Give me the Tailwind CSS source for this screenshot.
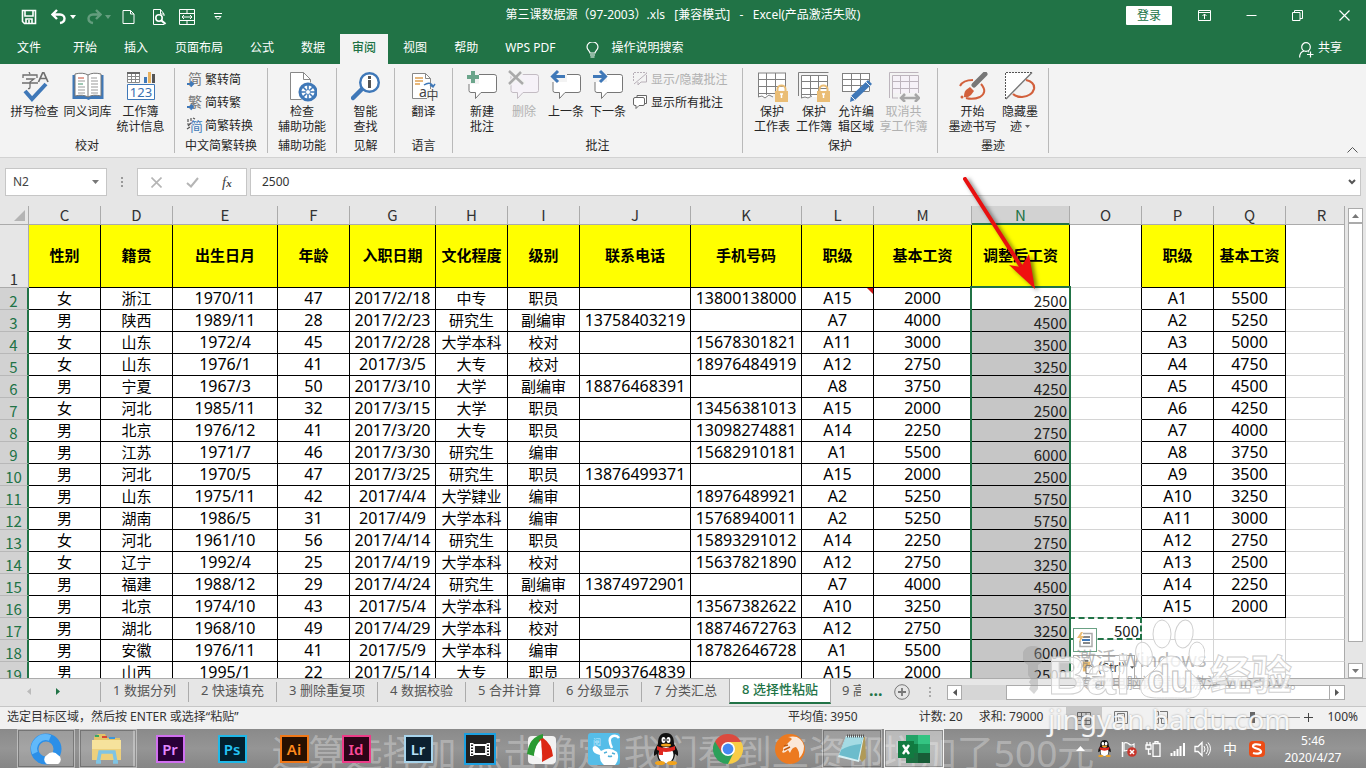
<!DOCTYPE html>
<html lang="zh-CN">
<head>
    <meta charset="UTF-8">
    <meta name="viewport" content="width=device-width, initial-scale=1.0">
    <title>第三课数据源（97-2003）.xls - Excel</title>
    <script src="https://cdn.jsdelivr.net/npm/@tailwindcss/browser@4"></script>
</head>
<body class="relative flex h-screen flex-col overflow-hidden bg-[#e6e6e6] font-['Noto_Sans','Noto_Sans_CJK_SC',sans-serif] text-xs text-[#262626]">

    <!-- Title bar -->
    <header class="relative flex h-[34px] shrink-0 items-center justify-between bg-[#217346] text-white">
        <div class="flex items-center pl-[21px]">
            <button aria-label="保存" class="mr-[14px]"><svg width="16" height="16" viewBox="0 0 16 16" fill="none" stroke="#fff" stroke-width="1.6"><path d="M1.5 1.5h13v13h-11l-2-2zM4 2v5h8V2M5 14v-4h6v4M8 11v3"/></svg></button>
            <button aria-label="撤消" class="mr-[3px]"><svg width="16" height="16" viewBox="0 0 16 16" fill="none" stroke="#fff" stroke-width="2.400"><path d="M6 1L1.500 5.500 6 10M2 5.500h7c3 0 4.500 2 4.500 4s-1.500 4-4.500 4.500"/></svg></button>
            <svg class="mr-[10px]" width="6" height="4" viewBox="0 0 6 4" fill="#fff"><path d="M0 0h6L3 4z"/></svg>
            <button aria-label="恢复" class="mr-[3px] opacity-30"><svg width="16" height="16" viewBox="0 0 16 16" fill="none" stroke="#fff" stroke-width="2.400"><path d="M10 1l4.500 4.500L10 10M14 5.500H7c-3 0-4.500 2-4.500 4s1.500 4 4.500 4.500"/></svg></button>
            <svg class="mr-[11px] opacity-30" width="6" height="4" viewBox="0 0 6 4" fill="#fff"><path d="M0 0h6L3 4z"/></svg>
            <button aria-label="新建" class="mr-[16px]"><svg width="13" height="16" viewBox="0 0 13 16" fill="none" stroke="#fff"><path d="M1 1.500h7.500l3.500 3.500v9.500H1zM8.500 1.500V5H12"/></svg></button>
            <button aria-label="打印预览" class="mr-[12px]"><svg width="16" height="16" viewBox="0 0 16 16" fill="none" stroke="#fff"><path d="M13 7V5L9.500.500H2.500v15H13M9.500.500V5H13"/><circle cx="8" cy="9" r="3.200" stroke-width="1.600"/><path d="M10.500 11.500l4 3.500" stroke-width="2.200"/></svg></button>
            <button aria-label="合并后居中" class="mr-[19px]"><svg width="16" height="16" viewBox="0 0 16 16" fill="none" stroke="#fff"><path d="M.5.500h15v15H.5zM.5 4.500h15M.5 11.500h15M8 .5v4M8 11.500v4M3 8h10M5 6L3 8l2 2M11 6l2 2-2 2"/></svg></button>
            <button aria-label="自定义快速访问工具栏"><svg width="8" height="8" viewBox="0 0 8 8" fill="none" stroke="#fff"><path d="M0 .5h8M1 3.500l3 3 3-3z"/></svg></button>
        </div>
        <h1 class="absolute inset-x-0 top-[5px] text-center leading-5 whitespace-pre pointer-events-none">第三课数据源（97-2003）.xls   [兼容模式]   -   Excel(产品激活失败)</h1>
        <div class="flex h-full items-start pt-[6px]">
            <button class="mr-[26px] h-[19px] w-[46px] rounded-[1px] bg-white text-[#217346] leading-[19px]">登录</button>
            <button aria-label="功能区显示选项" class="mt-[4px] mr-[35px]"><svg width="13" height="11" viewBox="0 0 13 11" fill="none" stroke="#fff"><path d="M.5.500h12v10H.5zM.5 2.500h12M6.500 9V4M4.500 6l2-2 2 2"/></svg></button>
            <button aria-label="最小化" class="mt-[4px] mr-[35px]"><svg width="11" height="11" viewBox="0 0 11 11" stroke="#fff"><path d="M.5 5.500h10"/></svg></button>
            <button aria-label="向下还原" class="mt-[4px] mr-[36px]"><svg width="11" height="11" viewBox="0 0 11 11" fill="none" stroke="#fff"><path d="M.5 2.500h7.500v8H.5zM2.500 2.500v-2h8v8H8"/></svg></button>
            <button aria-label="关闭" class="mt-[4px] mr-4"><svg width="11" height="11" viewBox="0 0 11 11" stroke="#fff" stroke-width="1.200"><path d="M.5.500l10 10M10.500.500L.5 10.500"/></svg></button>
        </div>
    </header>

    <!-- Ribbon tabs -->
    <nav class="flex h-[30px] shrink-0 gap-[3px] bg-[#217346] pl-[5px] text-white">
        <button class="mr-[5px] px-3 pb-0.5">文件</button>
        <button class="px-3 pb-0.5">开始</button>
        <button class="px-3 pb-0.5">插入</button>
        <button class="px-3 pb-0.5">页面布局</button>
        <button class="px-3 pb-0.5">公式</button>
        <button class="px-3 pb-0.5">数据</button>
        <button class="bg-[#f3f3f3] px-3 pb-0.5 font-medium text-[#217346]">审阅</button>
        <button class="px-3 pb-0.5">视图</button>
        <button class="px-3 pb-0.5">帮助</button>
        <button class="px-3 pb-0.5">WPS PDF</button>
        <button class="ml-[15px] flex items-center gap-[13px] pb-0.5"><svg class="mt-1" width="13" height="16" viewBox="0 0 13 16" fill="none" stroke="#fff" stroke-width="1.200"><path d="M4 11c0-2-3-3-3-6a5.300 5 0 0 1 11 0c0 3-3 4-3 6zM4 13h5M4.500 15h4"/></svg>操作说明搜索</button>
        <button class="mr-6 ml-auto flex items-center gap-1 pb-0.5"><svg class="mt-1" width="15" height="16" viewBox="0 0 15 16" fill="none" stroke="#fff" stroke-width="1.200"><circle cx="7" cy="5" r="4.300"/><path d="M.6 15.500c0-4 2-6 4.500-6.500M9 9.500l1 .5M8 12.500h6.500M11.500 9.500v6"/></svg>共享</button>
    </nav>

    <!-- Ribbon -->
    <section class="relative flex h-[94px] shrink-0 border-b border-[#d2d2d2] bg-[#f3f3f3] py-1 leading-[15px]">
        <div class="flex w-[175px] flex-col border-r border-[#b9b9b9] pt-1">
            <div class="flex h-[69px] items-start pl-2">
                <button class="flex w-[53px] flex-col items-center gap-0.5 whitespace-nowrap">
                    <svg width="30" height="30" viewBox="0 0 30 30"><g fill="none" stroke="#6f6f6f" stroke-width="1.300"><path d="M9 0l1 2M3 6V3h14v3M6 7h8l-4 3v5q0 2-2 1.500M2 11h16"/><path stroke-width="1.700" d="M18.500 10L23 0h.500L28 10M20 6.500h6.500"/></g><path d="M5 19l7 8L26 12" fill="none" stroke="#3f78b8" stroke-width="4"/></svg>
                    <span>拼写检查</span>
                </button>
                <button class="flex w-[53px] flex-col items-center gap-0.5 whitespace-nowrap">
                    <svg width="32" height="30" viewBox="0 0 32 30"><path d="M.5 3H3v20h26V3h2.500v24h-13l-2 1-2-1H.5z" fill="#3f78b8"/><path d="M3 2q8-2 13 1 5-3 13-1v22q-8-2-13 1-5-3-13-1z" fill="#fff" stroke="#777"/><path d="M16 3v22" stroke="#777"/><path d="M6 6h6" stroke="#c84830"/><path d="M6 9h7M6 15h7M6 18h7M6 21h7M19 6h6M19 9h7M19 12h7M19 15h7M19 18h7M19 21h7" stroke="#999"/><path d="M6 12h5" stroke="#3f9068"/></svg>
                    <span>同义词库</span>
                </button>
                <button class="flex w-[53px] flex-col items-center gap-0.5 whitespace-nowrap">
                    <svg width="30" height="30" viewBox="0 0 30 30"><path d="M1.500 1.500h12v9h-12zM1.500 4.500h12M1.500 7.500h12M5.500 1.500v9M9.500 1.500v9" fill="#fff" stroke="#888"/><path d="M1 0h13v2H1z" fill="#666"/><path d="M18 5h3v6h-3z" fill="#3f78b8"/><path d="M22 0h3v11h-3z" fill="#e8b260"/><path d="M26 2h3v9h-3z" fill="#555"/><path d="M1.500 12.500h27v15h-27z" fill="#fff" stroke="#3f78b8"/><text x="15" y="25" text-anchor="middle" font-size="13" fill="#3a70b0">123</text></svg>
                    <span>工作簿<br>统计信息</span>
                </button>
            </div>
            <span class="text-center">校对</span>
        </div>
        <div class="flex w-[93px] flex-col border-r border-[#b9b9b9] pt-1">
            <div class="flex h-[69px] flex-col gap-2 pl-3">
                <button class="flex items-center gap-[3px]"><svg class="overflow-visible" width="15" height="15" viewBox="0 0 15 15"><text x="1" y="12" font-size="14" fill="#777">简</text><path d="M0 12h6M3.500 9.500L6 12l-2.500 2.500" fill="none" stroke="#3f78b8" stroke-width="2"/></svg>繁转简</button>
                <button class="flex items-center gap-[3px]"><svg class="overflow-visible" width="15" height="15" viewBox="0 0 15 15"><text x="1" y="12" font-size="14" fill="#777">繁</text><path d="M0 12h6M3.500 9.500L6 12l-2.500 2.500" fill="none" stroke="#3f78b8" stroke-width="2"/></svg>简转繁</button>
                <button class="flex items-center gap-[3px]"><svg class="overflow-visible" width="15" height="15" viewBox="0 0 15 15"><path d="M1 1v3M4 0v3M0 6h3M1 8l3-3M0 11l3-2M6 0l2 1" stroke="#555" stroke-width="1.200"/><text x="3" y="13" font-size="13" fill="#3f78b8">简</text></svg>简繁转换</button>
            </div>
            <span class="text-center">中文简繁转换</span>
        </div>
        <div class="flex w-[69px] flex-col border-r border-[#b9b9b9] pt-1">
            <div class="flex h-[69px] items-start justify-center">
                <button class="flex w-[53px] flex-col items-center gap-0.5 whitespace-nowrap">
                    <svg width="30" height="30" viewBox="0 0 30 30"><path d="M3.500.500h13l7 7v20h-20z" fill="#fff" stroke="#888"/><path d="M16.500.500v7h7" fill="none" stroke="#888"/><circle cx="21" cy="20" r="10" fill="#f3f3f3"/><circle cx="21" cy="20" r="8" fill="#fff" stroke="#3f78b8" stroke-width="3"/><path d="M21 13v14M14 20h14M16 15l10 10M26 15L16 25" stroke="#3f78b8" stroke-width="1.600"/><circle cx="21" cy="20" r="2" fill="#fff"/></svg>
                    <span>检查<br>辅助功能</span>
                </button>
            </div>
            <span class="text-center">辅助功能</span>
        </div>
        <div class="flex w-[58px] flex-col border-r border-[#b9b9b9] pt-1">
            <div class="flex h-[69px] items-start justify-center">
                <button class="flex w-[53px] flex-col items-center gap-0.5 whitespace-nowrap">
                    <svg width="30" height="30" viewBox="0 0 30 30"><path d="M11 17L2 26" stroke="#3f78b8" stroke-width="4.500" stroke-linecap="round"/><circle cx="18.500" cy="10.500" r="9.300" fill="#fff" stroke="#3f78b8" stroke-width="2.400"/><path d="M17 4h3v3h-3zM17 8h3v8h-3z" fill="#555"/></svg>
                    <span>智能<br>查找</span>
                </button>
            </div>
            <span class="text-center">见解</span>
        </div>
        <div class="flex w-[58px] flex-col border-r border-[#b9b9b9] pt-1">
            <div class="flex h-[69px] items-start justify-center">
                <button class="flex w-[53px] flex-col items-center gap-0.5 whitespace-nowrap">
                    <svg width="30" height="30" viewBox="0 0 30 30"><path d="M3.500 1.500h13l5 5v20h-18z" fill="#fff" stroke="#888"/><path d="M16.500 1.500v5h5" fill="none" stroke="#888"/><path d="M6 6h8M6 9h8M6 12h5" stroke="#e0a050" stroke-width="1.500"/><path d="M15 13q6-4 9 1m-3-1l3 2 2-3" fill="none" stroke="#3f78b8" stroke-width="1.500"/><path d="M18 17h12v13H18z" fill="#f3f3f3"/><text x="10" y="25" font-size="14" fill="#444">a</text><text x="17.500" y="28" font-size="12" fill="#444">中</text></svg>
                    <span>翻译</span>
                </button>
            </div>
            <span class="text-center">语言</span>
        </div>
        <div class="flex w-[290px] flex-col border-r border-[#b9b9b9] pt-1">
            <div class="flex h-[69px] items-start pl-2">
                <button class="flex w-[42px] flex-col items-center gap-0.5 whitespace-nowrap">
                    <svg class="overflow-visible" width="32" height="30" viewBox="0 0 32 30"><path d="M5 2.500h23q2.500 0 2.500 2v14q0 2-2.500 2H15l-5.500 6v-6H5q-2 0-2-2V4.500q0-2 2-2z" fill="#fff" stroke="#777"/><path d="M0 -1h13v13H0z" fill="#f3f3f3"/><path d="M7 -1v12M1 5h12" stroke="#6ba58b" stroke-width="4"/></svg>
                    <span>新建<br>批注</span>
                </button>
                <button disabled class="flex w-[42px] flex-col items-center gap-0.5 whitespace-nowrap text-[#b1b1b1]">
                    <svg class="overflow-visible" width="32" height="30" viewBox="0 0 32 30"><path d="M5 2.500h23q2.500 0 2.500 2v14q0 2-2.500 2H15l-5.500 6v-6H5q-2 0-2-2V4.500q0-2 2-2z" fill="#f6f2f8" stroke="#c3bcc3"/><path d="M1 -1l15 13M15 -1L1 12" stroke="#f3f3f3" stroke-width="5"/><path d="M1 -1l14 13M13 0L1 12" stroke="#aaa" stroke-width="2.500"/></svg>
                    <span>删除</span>
                </button>
                <button class="flex w-[42px] flex-col items-center gap-0.5 whitespace-nowrap">
                    <svg class="overflow-visible" width="32" height="30" viewBox="0 0 32 30"><path d="M5 2.500h23q2.500 0 2.500 2v14q0 2-2.500 2H15l-5.500 6v-6H5q-2 0-2-2V4.500q0-2 2-2z" fill="#fff" stroke="#777"/><path d="M1 0h16v10H1z" fill="#f3f3f3"/><path d="M2 4.500h13M8 -1L2.500 4.500 8 10" fill="none" stroke="#3f78b8" stroke-width="3"/></svg>
                    <span>上一条</span>
                </button>
                <button class="flex w-[42px] flex-col items-center gap-0.5 whitespace-nowrap">
                    <svg class="overflow-visible" width="32" height="30" viewBox="0 0 32 30"><path d="M5 2.500h23q2.500 0 2.500 2v14q0 2-2.500 2H15l-5.500 6v-6H5q-2 0-2-2V4.500q0-2 2-2z" fill="#fff" stroke="#777"/><path d="M0 0h15v10H0z" fill="#f3f3f3"/><path d="M1 4.500h13M8 -1l5.500 5.500L8 10" fill="none" stroke="#3f78b8" stroke-width="3"/></svg>
                    <span>下一条</span>
                </button>
                <div class="flex flex-col gap-2 pl-1">
                    <button disabled class="flex items-center gap-[3px] whitespace-nowrap text-[#b1b1b1]"><svg width="15" height="15" viewBox="0 0 15 15" fill="none" stroke="#b8b0b8"><path stroke-dasharray="2 1" d="M.5 9V.500h13"/><path d="M14 1L1 12M13.500 3v7H8l-3 3v-3"/></svg>显示/隐藏批注</button>
                    <button class="flex items-center gap-[3px] whitespace-nowrap"><svg width="15" height="15" viewBox="0 0 15 15" fill="#fff" stroke="#666"><path d="M4 3V.500h9.500v8H12"/><path d="M2 2.500h8q1.500 0 1.500 1.500v5q0 1.500-1.500 1.500H6l-3 3v-3H2Q.5 10.500.5 9V4Q.5 2.500 2 2.500z"/></svg>显示所有批注</button>
                </div>
            </div>
            <span class="text-center">批注</span>
        </div>
        <div class="flex w-[195px] flex-col border-r border-[#b9b9b9] pt-1">
            <div class="flex h-[69px] items-start pl-2">
                <button class="flex w-[42px] flex-col items-center gap-0.5 whitespace-nowrap">
                    <svg width="32" height="30" viewBox="0 0 32 30"><path d="M2 .5h27v18H18l-1 6-3-2-2 3H2z" fill="#fff"/><path d="M2 1h28M2.500 1v24M10.500 1v22M19.500 1v22M29.500 1v14M2 7.500h27M2 14.500h27M2 21.500h17M2 25l4-1 3 2 4-3 4 2" fill="none" stroke="#808080"/><path d="M19 19h13v11H19z" fill="#eabd75"/><path d="M21.500 19v-2a4 3.500 0 0 1 8 0v2" fill="none" stroke="#eabd75" stroke-width="2"/><path d="M24 22h3M25.500 22v4" stroke="#fff" stroke-width="1.500"/></svg>
                    <span>保护<br>工作表</span>
                </button>
                <button class="flex w-[42px] flex-col items-center gap-0.5 whitespace-nowrap">
                    <svg width="32" height="30" viewBox="0 0 32 30"><path d="M4 3h26v22H4z" fill="#fff"/><path d="M.5 24V.500h30M3.500 26V3.500h26v14M12.500 4v20M20.500 4v19M3 9.500h26M3 16.500h26M3 22.500h16M3 26l4-1 3 1 4-2" fill="none" stroke="#808080"/><path d="M19 19h13v11H19z" fill="#eabd75"/><path d="M21.500 19v-2a4 3.500 0 0 1 8 0v2" fill="none" stroke="#eabd75" stroke-width="2"/><path d="M24 22h3M25.500 22v4" stroke="#fff" stroke-width="1.500"/></svg>
                    <span>保护<br>工作簿</span>
                </button>
                <button class="flex w-[42px] flex-col items-center gap-0.5 whitespace-nowrap">
                    <svg width="32" height="30" viewBox="0 0 32 30"><path d="M2.500 2h27v17h-27z" fill="#fff"/><path d="M2 1.500h28M2.500 1.500v18M11.500 1.500v18M20.500 1.500v18M29.500 1.500v18M2 7.500h27M2 13.500h27M2 19.500h27" fill="none" stroke="#808080"/><path d="M28 8l4 4-17 16-5 2 1-6z" fill="#3f78b8"/><path d="M26 10l4 4M11 24l4 4" stroke="#f3f3f3" stroke-width="1"/></svg>
                    <span>允许编<br>辑区域</span>
                </button>
                <button disabled class="flex w-[53px] flex-col items-center gap-0.5 whitespace-nowrap text-[#b1b1b1]">
                    <svg width="32" height="30" viewBox="0 0 32 30"><path d="M4 3h26v18H4z" fill="#f6f2f8"/><path d="M1.500 26V.500h29M4.500 26V3.500h26V21M12.500 4v18M21.500 4v17M4 9.500h26M4 16.500h26M4 26h6" fill="none" stroke="#bdb5bd"/><path d="M13 26h18M17 22l-4 4 4 4M27 22l4 4-4 4" fill="none" stroke="#a6a6a6" stroke-width="2.500"/></svg>
                    <span>取消共<br>享工作簿</span>
                </button>
            </div>
            <span class="text-center">保护</span>
        </div>
        <div class="flex w-[111px] flex-col border-r border-[#b9b9b9] pt-1">
            <div class="flex h-[69px] items-start pl-2">
                <button class="flex w-[53px] flex-col items-center gap-0.5 whitespace-nowrap">
                    <svg width="30" height="30" viewBox="0 0 30 30"><path d="M2 14Q5 8 15 8M23 12q7 8-1 13-7 3-14 1" fill="none" stroke="#d2603c" stroke-width="2"/><path d="M27 2L16 13" stroke="#777" stroke-width="5" stroke-linecap="round"/><path d="M12 15l4 4-3 4q-3 3-7 2 0-5 2-7z" fill="#d2603c"/><circle cx="4" cy="25" r="1.500" fill="#d2603c"/></svg>
                    <span>开始<br>墨迹书写</span>
                </button>
                <button class="flex w-[42px] flex-col items-center gap-0.5 whitespace-nowrap">
                    <svg width="32" height="30" viewBox="0 0 32 30"><path d="M1 1h26L1 27z" fill="#fff"/><path d="M1.500 27V.500H28" fill="none" stroke="#555" stroke-dasharray="2 1"/><path d="M28 .5L2 27" stroke="#777" stroke-width="1.400"/><path d="M22 8q9 2 8 9-2 7-12 8-6 0-9-3" fill="none" stroke="#d2603c" stroke-width="2.200"/></svg>
                    <span>隐藏墨<br>迹 <svg class="mb-0.5 inline" width="5" height="3" viewBox="0 0 5 3" fill="#666"><path d="M0 0h5L2.500 3z"/></svg></span>
                </button>
            </div>
            <span class="text-center">墨迹</span>
        </div>
        <button aria-label="折叠功能区" class="mr-2 ml-auto self-end"><svg width="11" height="6" viewBox="0 0 11 6" fill="none" stroke="#555"><path d="M.5 5.500l5-5 5 5"/></svg></button>
    </section>

    <!-- Formula bar -->
    <section class="flex h-[48px] shrink-0 items-start pt-[10px] pr-[5px] pl-[5px]">
        <div class="flex h-[28px] w-[102px] items-center border border-[#c6c6c6] bg-white">
            <input aria-label="名称框" value="N2" class="w-[84px] pl-[7px] text-[#444] outline-none">
            <button aria-label="名称列表" class="ml-0.5"><svg width="7" height="4" viewBox="0 0 7 4" fill="#777"><path d="M0 0h7L3.500 4z"/></svg></button>
        </div>
        <svg class="mt-[9px] mr-[14px] ml-[14px]" width="2" height="11" viewBox="0 0 2 11" fill="#999"><path d="M0 0h2v2H0zM0 4h2v2H0zM0 8h2v2H0z"/></svg>
        <div class="mr-[3px] flex h-[28px] w-[110px] items-center border border-[#c6c6c6] bg-white">
            <button aria-label="取消" class="ml-[13px]"><svg width="11" height="11" viewBox="0 0 11 11" stroke="#b5b5b5" stroke-width="1.600"><path d="M.5.500l10 10M10.500.500L.5 10.500"/></svg></button>
            <button aria-label="输入" class="ml-[24px]"><svg width="13" height="11" viewBox="0 0 13 11" fill="none" stroke="#b5b5b5" stroke-width="2"><path d="M1 6l4 3.500L12 1"/></svg></button>
            <button aria-label="插入函数" class="ml-[23px] font-['Liberation_Serif',serif] text-[15px] leading-4 text-[#444] italic">f<span class="text-[11px] font-bold">x</span></button>
        </div>
        <div class="flex h-[28px] flex-1 items-center border border-[#c6c6c6] bg-white">
            <input aria-label="编辑栏" value="2500" class="min-w-0 flex-1 pl-[11px] text-[#333] outline-none">
            <button aria-label="展开编辑栏" class="mr-1"><svg width="8" height="6" viewBox="0 0 8 6" fill="none" stroke="#555" stroke-width="2"><path d="M1 1l3 3 3-3"/></svg></button>
        </div>
    </section>

    <!-- Sheet -->
    <main class="flex min-h-0 flex-1">
        <div class="min-w-0 flex-1 overflow-hidden">
            <table class="w-full table-fixed border-separate border-spacing-0 text-center text-black">
                <colgroup>
                    <col class="w-[29px]"><col class="w-[72px]"><col class="w-[72px]"><col class="w-[105px]"><col class="w-[72px]"><col class="w-[86px]"><col class="w-[72px]"><col class="w-[72px]"><col class="w-[111px]"><col class="w-[111px]"><col class="w-[72px]"><col class="w-[98px]"><col class="w-[98px]"><col class="w-[72px]"><col class="w-[72px]"><col class="w-[72px]"><col>
                </colgroup>
                <thead id="columns"></thead>
                <tbody id="rows"></tbody>
            </table>
        </div>
        <div class="mr-[3px] ml-[3px] flex w-[15px] shrink-0 flex-col pt-[2px]">
            <button aria-label="向上滚动" class="flex h-[15px] shrink-0 items-center justify-center border border-[#ababab] bg-white"><svg width="7" height="4" viewBox="0 0 7 4" fill="#777"><path d="M0 4h7L3.500 0z"/></svg></button>
            <div class="mb-[21px] flex-1 border border-[#ababab] bg-white"></div>
            <button aria-label="向下滚动" class="flex h-[15px] shrink-0 items-center justify-center border border-[#ababab] bg-white"><svg width="7" height="4" viewBox="0 0 7 4" fill="#777"><path d="M0 0h7L3.500 4z"/></svg></button>
        </div>
    </main>

    <!-- Sheet tabs -->
    <section class="flex h-[28px] shrink-0 border-t border-[#ababab] text-[13px] text-[#555]">
        <div class="flex w-[100px] items-center gap-[25px] pb-0.5 pl-[27px]">
            <svg width="4" height="7" viewBox="0 0 4 7" fill="#bbb"><path d="M4 0v7L0 3.500z"/></svg>
            <svg width="4" height="7" viewBox="0 0 4 7" fill="#217346"><path d="M0 0v7l4-3.500z"/></svg>
        </div>
        <button class="mt-[3px] h-[20px] w-[88px] border-l border-[#ababab] pb-1 leading-4 whitespace-nowrap">1 数据分列</button>
        <button class="mt-[3px] h-[20px] w-[88px] border-l border-[#ababab] pb-1 leading-4 whitespace-nowrap">2 快速填充</button>
        <button class="mt-[3px] h-[20px] w-[101px] border-l border-[#ababab] pb-1 leading-4 whitespace-nowrap">3 删除重复项</button>
        <button class="mt-[3px] h-[20px] w-[88px] border-l border-[#ababab] pb-1 leading-4 whitespace-nowrap">4 数据校验</button>
        <button class="mt-[3px] h-[20px] w-[88px] border-l border-[#ababab] pb-1 leading-4 whitespace-nowrap">5 合并计算</button>
        <button class="mt-[3px] h-[20px] w-[88px] border-l border-[#ababab] pb-1 leading-4 whitespace-nowrap">6 分级显示</button>
        <button class="mt-[3px] h-[20px] w-[88px] border-l border-[#ababab] pb-1 leading-4 whitespace-nowrap">7 分类汇总</button>
        <button class="h-[25px] w-[102px] border-x border-b-2 border-x-[#ababab] border-b-[#217346] bg-white pb-px font-medium whitespace-nowrap text-[#217346]">8 选择性粘贴</button>
        <button class="mt-[3px] h-[20px] w-[30px] overflow-hidden pb-1 pl-[11px] text-left leading-4 whitespace-nowrap">9 高级</button>
        <button class="ml-2 h-[22px] text-base leading-[22px] font-bold text-[#217346]">...</button>
        <button aria-label="新工作表" class="mt-[5px] ml-[11px] h-4"><svg width="16" height="16" viewBox="0 0 16 16" fill="none" stroke="#777"><circle cx="8" cy="8" r="7.300"/><path d="M4 8h8M8 4v8" stroke-width="1.800"/></svg></button>
        <div class="ml-auto flex items-start pt-[6px]">
            <svg class="mt-0.5 mr-4" width="2" height="11" viewBox="0 0 2 11" fill="#aaa"><path d="M0 0h2v2H0zM0 4h2v2H0zM0 8h2v2H0z"/></svg>
            <button aria-label="向左滚动" class="flex h-[15px] w-[15px] items-center justify-center border border-[#ababab] bg-white"><svg width="4" height="7" viewBox="0 0 4 7" fill="#555"><path d="M4 0v7L0 3.500z"/></svg></button>
            <div class="h-[15px] w-[44px] bg-[#d6d6d6]"></div>
            <div class="h-[15px] w-[324px] border border-[#ababab] bg-white"></div>
            <button aria-label="向右滚动" class="mr-[21px] flex h-[15px] w-[15px] items-center justify-center border border-l-0 border-[#ababab] bg-white"><svg width="4" height="7" viewBox="0 0 4 7" fill="#555"><path d="M0 0v7l4-3.500z"/></svg></button>
        </div>
    </section>

    <!-- Status bar -->
    <footer class="flex h-[23px] shrink-0 items-center border-t border-[#c6c6c6] bg-[#f1f1f1] pr-2 pl-[7px] pb-0.5 leading-[20px] text-[#333]">
        <span>选定目标区域，然后按 ENTER 或选择“粘贴”</span>
        <span class="ml-auto">平均值: 3950</span>
        <span class="ml-[61px]">计数: 20</span>
        <span class="ml-4">求和: 79000</span>
        <button aria-label="普通" class="-mb-0.5 ml-[23px] flex h-[22px] w-[36px] items-center justify-center bg-[#c8c8c8]"><svg width="14" height="13" viewBox="0 0 14 13" fill="none" stroke="#666"><path d="M.5.500h13v12H.5zM.5 4.500h13M.5 8.500h13M4.500.500v12M9 .5v12"/></svg></button>
        <button aria-label="页面布局" class="ml-[12px]"><svg width="14" height="13" viewBox="0 0 14 13" fill="none" stroke="#777"><path d="M.5.500h13v12H.5zM3.500 2.500h7v8h-7zM5 5h4M5 7h4"/></svg></button>
        <button aria-label="分页预览" class="ml-[26px]"><svg width="14" height="13" viewBox="0 0 14 13" fill="none" stroke="#777"><path d="M.5.500h4v12h-4zM6 .5h7.500v7H6M7.500 8v4.500h6V8M.5 8h4"/></svg></button>
        <button aria-label="缩小" class="ml-[19px]"><svg width="9" height="9" viewBox="0 0 9 9" stroke="#555"><path d="M0 4.500h9"/></svg></button>
        <input type="range" aria-label="缩放" min="10" max="190" value="100" class="mr-1 ml-2 h-3 w-[96px] appearance-none bg-[linear-gradient(#999,#999)] bg-[length:100%_1px] bg-center bg-no-repeat [&::-webkit-slider-thumb]:h-[11px] [&::-webkit-slider-thumb]:w-[5px] [&::-webkit-slider-thumb]:appearance-none [&::-webkit-slider-thumb]:bg-[#666]">
        <button aria-label="放大"><svg width="9" height="9" viewBox="0 0 9 9" stroke="#444"><path d="M0 4.500h9M4.500 0v9"/></svg></button>
        <span class="ml-[14px]">100%</span>
    </footer>

    <!-- Taskbar -->
    <div class="relative flex h-[39px] shrink-0 items-center justify-between overflow-hidden bg-linear-to-b from-[#8a8a8a] via-[#959595] to-[#868686] pl-[15px]">
        <p class="absolute inset-x-0 top-0 text-center text-[37px] leading-[48px] whitespace-nowrap text-white/30">运算选择加 点击确定 我们看到工资都增加了500元</p>
        <div class="relative flex h-full">
            <button aria-label="QQ浏览器" class="flex w-[62px] items-center justify-center"><span class="flex h-full w-[58px] items-center justify-center border border-white/30 bg-white/15 outline outline-black/25 -outline-offset-2">
                <svg width="32" height="32" viewBox="0 0 32 32"><circle cx="16" cy="16" r="11.500" fill="none" stroke="#2b8fe8" stroke-width="8"/><path d="M5 20A11.500 11.500 0 0 1 20 5" fill="none" stroke="#61b9fa" stroke-width="6"/><path d="M17 31a5 5 0 0 1 0-9 7 7 0 0 1 11 0 5 5 0 0 1 0 9z" fill="#fff"/></svg></span></button>
            <button aria-label="文件资源管理器" class="flex w-[62px] items-center justify-center"><span class="flex h-full w-[58px] items-center justify-center border border-r-4 border-white/30 bg-white/15 outline outline-black/25 -outline-offset-2">
                <svg width="34" height="30" viewBox="0 0 34 30"><path d="M4 3l4-3h7l2 4h13v22H4z" fill="#e4c368"/><path d="M5 2h4" stroke="#38a860" stroke-width="2"/><path d="M12 3h5" stroke="#d94832" stroke-width="2"/><path d="M19 4h6" stroke="#3c96dc" stroke-width="2"/><path d="M2 6h29v20H2z" fill="#f6e29c"/><path d="M2 15h29v11H2z" fill="#edd07c"/><path d="M8 29l2-11h14l2 11M6 28h5M23 28h5" fill="none" stroke="#7fc4e4" stroke-width="3.500"/></svg></span></button>
            <button aria-label="Premiere" class="flex w-[62px] items-center justify-center"><span class="flex h-[28px] w-[29px] items-center justify-center border-2 border-[#d070f0] bg-[#2a0038] text-[15px] font-semibold text-[#e288ff]">Pr</span></button>
            <button aria-label="Photoshop" class="flex w-[62px] items-center justify-center"><span class="flex h-[28px] w-[29px] items-center justify-center border-2 border-[#20b8e8] bg-[#02202e] text-[15px] font-semibold text-[#25c4f5]">Ps</span></button>
            <button aria-label="Illustrator" class="flex w-[62px] items-center justify-center"><span class="flex h-[28px] w-[29px] items-center justify-center border-2 border-[#f07818] bg-[#281000] text-[15px] font-semibold text-[#ff8a1c]">Ai</span></button>
            <button aria-label="InDesign" class="flex w-[62px] items-center justify-center"><span class="flex h-[28px] w-[29px] items-center justify-center border-2 border-[#ec3c88] bg-[#2c0418] text-[15px] font-semibold text-[#fb4a98]">Id</span></button>
            <button aria-label="Lightroom" class="flex w-[62px] items-center justify-center"><span class="flex h-[28px] w-[29px] items-center justify-center border-2 border-[#a8d4ec] bg-[#0c2030] text-[15px] font-semibold text-[#b8e0f8]">Lr</span></button>
            <button aria-label="视频编辑" class="flex w-[62px] items-center justify-center"><svg width="32" height="32" viewBox="0 0 32 32"><path d="M1 1h30v30H1z" fill="#202020" stroke="#1ca0e0" stroke-width="2"/><path d="M6.500 10v13M25.500 10v13" stroke="#fff" stroke-width="1"/><path d="M8 10v13M24 10v13" stroke="#fff" stroke-width="3" stroke-dasharray="1.500 1.500"/><path d="M10 12h12v9H10z" fill="none" stroke="#fff" stroke-width="1.800"/></svg></button>
            <button aria-label="FastStone Capture" class="flex w-[62px] items-center justify-center"><svg width="32" height="32" viewBox="0 0 32 32"><rect x="2" y="3" width="28" height="28" rx="4" fill="#f2f2f2"/><path d="M17 1Q3 4 1 21l7 2Q10 10 17 7z" fill="#2b9a32"/><path d="M13 7q4 10 3 22l11-6Q26 11 17 5z" fill="#dc2814"/><path d="M15 7Q9 12 8 22l7 4Q16 15 15 7z" fill="#fff"/></svg></button>
            <button aria-label="桌面助手" class="flex w-[62px] items-center justify-center"><svg width="32" height="32" viewBox="0 0 32 32"><rect width="32" height="32" rx="3" fill="#55bde8"/><path d="M12 22Q3 20 5 14q3-3 8 4 8-5 16 1 3 7-2 13H16q-5-4-4-10z" fill="#fff"/><path d="M24 15q-5-10 1-12 4-1 6 2" fill="none" stroke="#fff" stroke-width="2.500"/><path d="M16 20l3-1M24 20l3 1M20 23q2 1 4 0" fill="none" stroke="#50b0d8" stroke-width="1.500"/><text x="5" y="12" font-size="8" fill="#c0ebff">阅</text></svg></button>
            <button aria-label="QQ" class="flex w-[62px] items-center justify-center"><svg width="28" height="32" viewBox="0 0 28 32"><path d="M14 0C7 0 6 6 6 11q-5 7-4 12l3-2q0 5 4 8h10q4-3 4-8l3 2q1-5-4-12c0-5-1-11-8-11z" fill="#111"/><ellipse cx="14" cy="22" rx="7.500" ry="8" fill="#fff"/><path d="M5 13q9 4 18 0v4q-9 4-18 0z" fill="#e02820"/><path d="M7 16h4v6H7z" fill="#e02820"/><ellipse cx="11.500" cy="7" rx="2" ry="3" fill="#fff"/><ellipse cx="16.500" cy="7" rx="2" ry="3" fill="#fff"/><path d="M12 6v2M16 6v2" stroke="#111"/><ellipse cx="14" cy="12" rx="5" ry="1.500" fill="#f2a31c"/><ellipse cx="8" cy="30" rx="5" ry="2" fill="#f2a31c"/><ellipse cx="20" cy="30" rx="5" ry="2" fill="#f2a31c"/></svg></button>
            <button aria-label="Chrome" class="flex w-[62px] items-center justify-center"><svg width="30" height="30" viewBox="0 0 30 30"><path d="M15 15L2 7.500A15 15 0 0 1 28 7.500z" fill="#dc4a3e"/><path d="M15 15L28 7.500A15 15 0 0 1 15 30z" fill="#f8cc46"/><path d="M15 15v15A15 15 0 0 1 2 7.500z" fill="#2ca05a"/><path d="M15 8h13l-7 10z" fill="#f8cc46"/><path d="M2 7.500L9 19l6-11z" fill="#dc4a3e"/><path d="M9 18l6 12 6-12z" fill="#2ca05a"/><circle cx="15" cy="15" r="7" fill="#fff"/><circle cx="15" cy="15" r="5.400" fill="#4688f0"/></svg></button>
            <button aria-label="猎豹浏览器" class="flex w-[62px] items-center justify-center"><svg width="32" height="32" viewBox="0 0 32 32"><circle cx="16" cy="16" r="15" fill="#ec7a20"/><path d="M14 4Q27 1 30 13q0 8-5 12 1-7-3-11-4 0-6 6l-2-3q-4 4-6 2 2-2 1-4l6-6 3-3q-2-2-4-2z" fill="#fbe8d8"/><path d="M10 13l4-1M10 17l6-3" stroke="#c05a10" stroke-width="1.500"/></svg></button>
            <button aria-label="记事本" class="flex w-[62px] items-center justify-center"><span class="flex h-full w-[60px] items-center justify-center border border-white/30 bg-white/15 outline outline-black/25 -outline-offset-2">
                <svg width="32" height="32" viewBox="0 0 32 32"><path d="M10 4h19l1 21-4 4z" fill="#b09a58"/><path d="M10 3h18l-5 26-21-5z" fill="#d8f0f4"/><path d="M10 4h17l-5 23-19-5z" fill="#6cbccc"/><path d="M10 4h17l-2 7Q13 12 5 17z" fill="#a5dbe4"/><path d="M11 3h17" stroke="#555" stroke-width="3" stroke-dasharray="1 1"/></svg></span></button>
            <button aria-label="Excel" class="flex w-[62px] items-center justify-center"><span class="flex h-full w-[60px] items-center justify-center border border-white/80 bg-white/40 outline outline-black/25 -outline-offset-2">
                <svg width="32" height="30" viewBox="0 0 32 30"><path d="M8 1h24v28H8z" fill="#1d6f42"/><path d="M8 1h12v9H8z" fill="#22a366"/><path d="M20 1h12v9H20z" fill="#34c482"/><path d="M20 10h12v9H20z" fill="#22a366"/><path d="M8 10h12v9H8z" fill="#107c41"/><path d="M20 19h12v10H20z" fill="#185c37"/><path d="M0 7h16v17H0z" fill="#117a40"/><path d="M5 11l6 9M11 11l-6 9" stroke="#fff" stroke-width="2.400"/></svg></span></button>
        </div>
        <div class="relative flex items-center text-white">
            <svg class="mr-[12px]" width="9" height="5" viewBox="0 0 9 5" fill="#fff"><path d="M0 5L4.500 0 9 5z"/></svg>
            <svg class="mr-[9px]" width="15" height="17" viewBox="0 0 28 32"><path d="M14 0C7 0 6 6 6 11q-5 7-4 12l3-2q0 5 4 8h10q4-3 4-8l3 2q1-5-4-12c0-5-1-11-8-11z" fill="#111"/><ellipse cx="14" cy="22" rx="7.500" ry="8" fill="#fff"/><path d="M5 13q9 4 18 0v5q-9 4-18 0z" fill="#e02820"/><ellipse cx="11" cy="7" rx="2.500" ry="3.500" fill="#fff"/><ellipse cx="17" cy="7" rx="2.500" ry="3.500" fill="#fff"/><ellipse cx="14" cy="12" rx="5" ry="1.500" fill="#f2a31c"/><ellipse cx="7" cy="30" rx="5" ry="2" fill="#f2a31c"/><ellipse cx="21" cy="30" rx="5" ry="2" fill="#f2a31c"/></svg>
            <svg class="mr-[8px]" width="16" height="16" viewBox="0 0 16 16"><path d="M1.500 1v15" stroke="#fff" stroke-width="1.500"/><path d="M3 2q3-1 5 1t5 0v7q-3 1-5 0t-5 0z" fill="#999" stroke="#fff" stroke-width="1.200"/><circle cx="11" cy="11" r="4.800" fill="#c8362c"/><path d="M9 9l4 4M13 9l-4 4" stroke="#fff" stroke-width="1.500"/></svg>
            <svg class="mr-[9px]" width="16" height="16" viewBox="0 0 16 16" fill="none" stroke="#fff" stroke-width="1.300"><path d="M8 2.500h7v13H8zM10 2V.500h3V2M1 4h5v4H1zM2 4V1M5 4V1M3.500 8v5H6"/></svg>
            <svg class="mr-[8px]" width="16" height="16" viewBox="0 0 16 16" fill="none" stroke="#fff" stroke-width="2"><path d="M1.500 15v-3M4.500 15v-5M7.500 15V8M10.500 15V5M14 15V2"/></svg>
            <svg class="mr-[12px]" width="17" height="16" viewBox="0 0 17 16" fill="none" stroke="#fff"><path d="M1 5.500h3l4-4v13l-4-4H1z" stroke-width="1.300"/><path d="M10 5q2 3 0 6M12 3q4 5 0 10M14 1.500q5 6 0 13" /></svg>
            <span class="mr-[12px] text-sm leading-5">中</span>
            <svg class="mr-[18px]" width="16" height="16" viewBox="0 0 16 16"><rect width="16" height="16" rx="4" fill="#ec4c16"/><path d="M12 4Q4 2 4 5.500c0 2 8 2 8 5 0 2.500-5 2.500-8 1.500" fill="none" stroke="#fff" stroke-width="2.200"/></svg>
            <div class="mr-[23px] w-[60px] text-center leading-[17px] whitespace-nowrap">5:46<br>2020/4/27</div>
        </div>
    </div>

    <!-- Red pointer to the first result -->
    <svg class="pointer-events-none absolute top-[172px] left-[955px] z-20 drop-shadow-[3px_2px_2px_rgba(0,0,0,0.5)]" width="90" height="125" viewBox="0 0 90 125"><path d="M10 7l57 89" stroke="#e81010" stroke-width="4" stroke-linecap="round"/><path d="M80 117L54 93l12 2 8-13z" fill="#f01010"/></svg>

    <!-- Activation notice -->
    <div class="pointer-events-none absolute right-[60px] bottom-[76px] z-20 w-[230px] whitespace-nowrap text-[#888]/60">
        <p class="text-xl leading-6">激活 Windows</p>
        <p class="text-[15px] leading-5">转到“电脑设置”以激活 Windows。</p>
    </div>
    <svg class="pointer-events-none absolute right-[323px] bottom-[74px] z-20" width="20" height="48" viewBox="0 0 20 48" fill="#999" fill-opacity=".4"><path d="M10 0a10 10 0 0 1 5 19v24l-4 5-5-5 2-4-2-3 2-3-3-4V19A10 10 0 0 1 10 0z"/></svg>

    <!-- Site mark -->
    <div class="pointer-events-none absolute right-[74px] bottom-[31px] z-20 flex w-[244px] flex-col whitespace-nowrap text-white/75">
        <div class="flex h-[84px] items-end justify-between">
            <span class="font-['Liberation_Sans',sans-serif] text-[53px] leading-[50px] font-bold [-webkit-text-stroke:1px_#d0d0d0]">Bai</span>
            <svg class="shrink-0" width="70" height="84" viewBox="0 0 70 84" fill="#fff" fill-opacity=".75" stroke="#d0d0d0"><ellipse cx="27" cy="17" rx="9" ry="14"/><ellipse cx="49" cy="17" rx="9" ry="14" transform="rotate(10 49 17)"/><ellipse cx="9" cy="37" rx="8" ry="12" transform="rotate(-15 9 37)"/><ellipse cx="62" cy="37" rx="8" ry="12"/><path d="M36 39c-10 0-12 10-18 15S4 64 6 73s12 8 30 8 26 2 29-7-5-14-11-20-8-15-18-15z"/><text x="12" y="75" font-family="Liberation Sans" font-size="38" font-weight="bold" stroke="#c0c0c0">du</text></svg>
            <span class="text-[41px] leading-[54px] font-bold [-webkit-text-stroke:1px_#d0d0d0]">经验</span>
        </div>
        <span class="text-[28px] leading-[36px] text-white/90 text-shadow-[0_0_2px_#999]">jingyan.baidu.com</span>
    </div>

<script>
    const columns = ['C', 'D', 'E', 'F', 'G', 'H', 'I', 'J', 'K', 'L', 'M', 'N', 'O', 'P', 'Q', 'R'];
    const titles = ['性别', '籍贯', '出生日月', '年龄', '入职日期', '文化程度', '级别', '联系电话', '手机号码', '职级', '基本工资', '调整后工资', '', '职级', '基本工资', ''];

    // columns C to N, rows 2 to 19
    const people = [
        '女,浙江,1970/11,47,2017/2/18,中专,职员,,13800138000,A15,2000,2500',
        '男,陕西,1989/11,28,2017/2/23,研究生,副编审,13758403219,,A7,4000,4500',
        '女,山东,1972/4,45,2017/2/28,大学本科,校对,,15678301821,A11,3000,3500',
        '女,山东,1976/1,41,2017/3/5,大专,校对,,18976484919,A12,2750,3250',
        '男,宁夏,1967/3,50,2017/3/10,大学,副编审,18876468391,,A8,3750,4250',
        '女,河北,1985/11,32,2017/3/15,大学,职员,,13456381013,A15,2000,2500',
        '男,北京,1976/12,41,2017/3/20,大专,职员,,13098274881,A14,2250,2750',
        '男,江苏,1971/7,46,2017/3/30,研究生,编审,,15682910181,A1,5500,6000',
        '男,河北,1970/5,47,2017/3/25,研究生,职员,13876499371,,A15,2000,2500',
        '男,山东,1975/11,42,2017/4/4,大学肄业,编审,,18976489921,A2,5250,5750',
        '男,湖南,1986/5,31,2017/4/9,大学本科,编审,,15768940011,A2,5250,5750',
        '女,河北,1961/10,56,2017/4/14,研究生,职员,,15893291012,A14,2250,2750',
        '女,辽宁,1992/4,25,2017/4/19,大学本科,校对,,15637821890,A12,2750,3250',
        '男,福建,1988/12,29,2017/4/24,研究生,副编审,13874972901,,A7,4000,4500',
        '男,北京,1974/10,43,2017/5/4,大学本科,校对,,13567382622,A10,3250,3750',
        '男,湖北,1968/10,49,2017/4/29,大学本科,校对,,18874672763,A12,2750,3250',
        '男,安徽,1976/11,41,2017/5/9,大学本科,编审,,18782646728,A1,5500,6000',
        '男,山西,1995/1,22,2017/5/14,大专,职员,15093764839,,A15,2000,2500'
    ];
    const salaries = [5500, 5250, 5000, 4750, 4500, 4250, 4000, 3750, 3500, 3250, 3000, 2750, 2500, 2250, 2000];

    const selectionBox = '<div class="pointer-events-none absolute -top-0.5 -left-0.5 z-10 h-[600px] w-[101px] border-2 border-[#217346]"></div>';
    const copyBox = `<div class="absolute -top-px -left-px z-10 h-[23px] w-[73px] border-2 border-dashed border-[#217346]"></div>
        <button aria-label="快速分析" class="absolute top-[10px] left-[3px] z-10 flex h-6 w-6 items-center justify-center border border-[#6aa184] bg-white"><svg width="16" height="16" viewBox="0 0 16 16" fill="none"><path d="M6 1.500h9v13H3V9" stroke="#aaa" stroke-width="1.500"/><path d="M6 5h7M6 11h7" stroke="#888" stroke-width="2"/><path d="M5 8h8" stroke="#3f78b8" stroke-width="2"/><path d="M4 0L0 6h3l-1 5 5-7H4l2-4z" fill="#eabd75"/></svg></button>
        <button class="absolute top-[37px] left-[3px] z-10 flex h-6 w-[62px] items-center gap-1 border border-[#ababab] bg-white pl-2 text-xs text-[#444]"><svg width="13" height="16" viewBox="0 0 13 16" fill="none"><path d="M1 2h8v11H1z" fill="#eabd75"/><path d="M3 1h4" stroke="#555" stroke-width="2"/><path d="M4.500 6.500H10l2 2v7H4.500z" fill="#fff" stroke="#666"/></svg>(Ctrl)<svg width="5" height="3" viewBox="0 0 5 3" fill="#555"><path d="M0 0h5L2.500 3z"/></svg></button>`;
    const commentMark = '<svg class="absolute top-0 right-0" width="6" height="6" viewBox="0 0 6 6" fill="#d01818"><path d="M0 0h6v6z"/></svg>';

    // column letters
    let head = '<tr><th class="relative h-[19px] border-r border-b border-[#ababab] p-0"><svg class="absolute right-[3px] bottom-[3px]" width="11" height="11" viewBox="0 0 11 11" fill="#b4b4b4"><path d="M11 0v11H0z"/></svg></th>';
    columns.forEach(letter => {
        if (letter === 'N') {
            head += '<th class="h-[19px] border-r border-b-2 border-r-[#ababab] border-b-[#217346] bg-[#d2d2d2] p-0 font-[\'Noto_Sans_CJK_SC\',sans-serif] text-[15px] leading-4 font-normal text-[#217346]">N</th>';
        } else if (letter === 'R') {
            // R runs on past the edge of the window
            head += '<th class="h-[19px] border-r border-b border-[#ababab] p-0 pl-[13px] font-[\'Noto_Sans_CJK_SC\',sans-serif] text-[15px] leading-4 font-normal text-[#333]">R</th>';
        } else {
            head += `<th class="h-[19px] border-r border-b border-[#ababab] p-0 font-['Noto_Sans_CJK_SC',sans-serif] text-[15px] leading-4 font-normal text-[#333]">${letter}</th>`;
        }
    });
    document.getElementById('columns').innerHTML = head + '</tr>';

    // row 1 with the yellow titles
    let body = '<tr><th class="h-[63px] border-r border-b border-[#ababab] p-0 align-bottom font-[\'Noto_Sans_CJK_SC\',sans-serif] text-[15px] leading-4 font-normal text-[#333]">1</th>';
    titles.forEach((title, i) => {
        if (title) {
            body += `<th class="h-[63px] border-r border-b border-black bg-[#ffff00] p-0 pb-0.5 text-[15px] leading-5 font-bold whitespace-nowrap">${title}</th>`;
        } else if (columns[i] === 'O') {
            body += '<td class="h-[63px] border-r border-b border-r-black border-b-[#d4d4d4] bg-white p-0"></td>';
        } else {
            body += '<td class="h-[63px] border-r border-b border-r-[#ababab] border-b-[#d4d4d4] bg-white p-0"></td>';
        }
    });
    body += '</tr>';

    people.forEach((person, i) => {
        const row = i + 2;
        body += `<tr><th class="h-[22px] border-r-2 border-b border-r-[#217346] border-b-[#b8b8b8] bg-[#d2d2d2] p-0 pb-px align-bottom font-['Noto_Sans_CJK_SC',sans-serif] text-[15px] leading-[14px] font-normal text-[#217346]">${row}</th>`;
        person.split(',').forEach((value, c) => {
            if (c === 11) {
                const fill = row === 2 ? 'bg-white' : 'bg-[#c6c6c6]';
                body += `<td class="relative h-[22px] border-r border-b border-black ${fill} p-0 pr-0.5 pb-px text-right align-bottom font-['Noto_Sans_CJK_SC',sans-serif] text-[15px] leading-[14px] text-[#222]">${value}${row === 2 ? selectionBox : ''}</td>`;
                return;
            }
            const size = /^[\dA]/.test(value) ? 'text-base' : 'text-[15px]';
            const mark = row === 2 && c === 9 ? commentMark : '';
            body += `<td class="relative h-[22px] border-r border-b border-black bg-white p-0 pb-0.5 ${size} leading-[18px] whitespace-nowrap">${value}${mark}</td>`;
        });
        if (i < salaries.length) {
            body += '<td class="h-[22px] border-r border-b border-r-black border-b-[#d4d4d4] bg-white p-0"></td>';
            body += `<td class="h-[22px] border-r border-b border-black bg-white p-0 pb-0.5 text-base leading-[18px]">A${i + 1}</td>`;
            body += `<td class="h-[22px] border-r border-b border-black bg-white p-0 pb-0.5 text-base leading-[18px]">${salaries[i]}</td>`;
        } else {
            body += `<td class="relative h-[22px] border-r border-b border-[#d4d4d4] bg-white p-0 pr-0.5 pb-px text-right align-bottom font-['Noto_Sans_CJK_SC',sans-serif] text-[15px] leading-[14px] text-[#222]">${row === 17 ? '500' + copyBox : ''}</td>`;
            body += '<td class="h-[22px] border-r border-b border-[#d4d4d4] bg-white p-0"></td>';
            body += '<td class="h-[22px] border-r border-b border-[#d4d4d4] bg-white p-0"></td>';
        }
        body += '<td class="h-[22px] border-r border-b border-r-[#ababab] border-b-[#d4d4d4] bg-white p-0"></td></tr>';
    });
    document.getElementById('rows').innerHTML = body;
</script>
</body>
</html>
